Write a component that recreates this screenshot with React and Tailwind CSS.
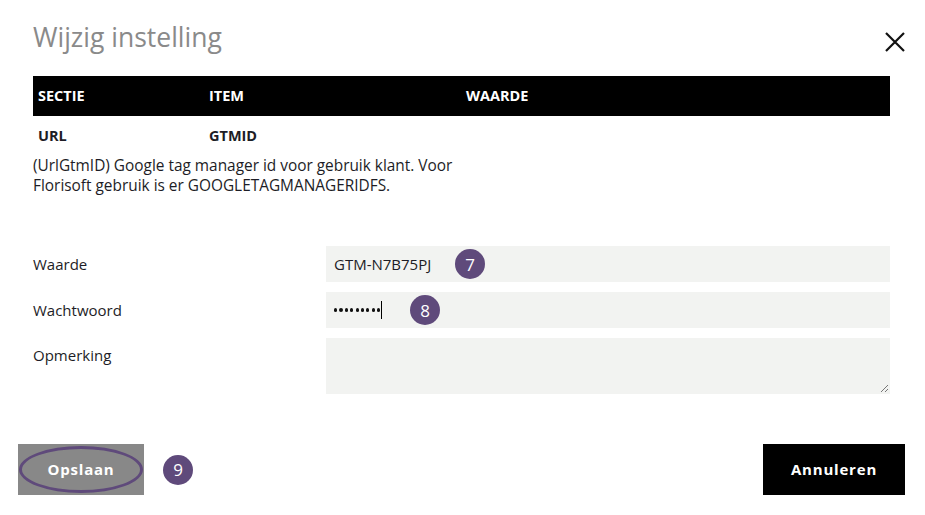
import React from 'react';

const Badge = ({ n, className = '' }) => (
  <span
    className={`flex items-center justify-center w-[30px] h-[30px] rounded-full bg-[#5f4a7b] text-white text-[17px] leading-none ${className}`}
  >
    {n}
  </span>
);

export default function App() {
  return (
    <div className="w-[925px] h-[515px] bg-white font-['Open_Sans',sans-serif] text-[#1d1d26]">
      {/* Header */}
      <div className="flex items-start justify-between pl-[33px] pr-[20px] pt-[19px]">
        <h1 className="text-[26.5px] leading-[36px] text-[#8a8a8a] font-normal">Wijzig instelling</h1>
        <button className="mt-[13px] w-[20px] h-[20px] flex items-center justify-center">
          <svg width="20" height="20" viewBox="0 0 20 20">
            <path d="M1 1 L19 19 M19 1 L1 19" stroke="#111" strokeWidth="2.2" />
          </svg>
        </button>
      </div>

      {/* Table */}
      <div className="mx-[33px] mt-[21px] w-[857px]">
        <div className="grid grid-cols-[171px_257px_1fr] h-[40px] items-center bg-black px-[5px] text-white text-[14.5px] font-bold">
          <span>SECTIE</span>
          <span>ITEM</span>
          <span>WAARDE</span>
        </div>
        <div className="grid grid-cols-[171px_257px_1fr] h-[40px] items-center px-[5px] text-[14.5px] font-bold">
          <span>URL</span>
          <span>GTMID</span>
          <span />
        </div>
        <p className="w-[450px] text-[15.4px] leading-[20px]">
          (UrlGtmID) Google tag manager id voor gebruik klant. Voor Florisoft gebruik is er GOOGLETAGMANAGERIDFS.
        </p>
      </div>

      {/* Form */}
      <div className="ml-[33px] mt-[50px] w-[857px] flex flex-col gap-[10px] text-[15px]">
        <div className="flex items-center">
          <label className="w-[293px]">Waarde</label>
          <div className="relative flex-1 h-[36px] bg-[#f2f3f1] flex items-center px-[8px]">
            <span>GTM-N7B75PJ</span>
            <Badge n="7" className="absolute left-[129px] top-[3px]" />
          </div>
        </div>
        <div className="flex items-center">
          <label className="w-[293px]">Wachtwoord</label>
          <div className="relative flex-1 h-[36px] bg-[#f2f3f1] flex items-center px-[8px]">
            <span className="flex items-center gap-[2.2px]">
              {[0, 1, 2, 3, 4, 5, 6, 7, 8].map((i) => (
                <span key={i} className="w-[3.2px] h-[3.2px] rounded-full bg-[#111]" />
              ))}
            </span>
            <span className="ml-[1px] w-px h-[18px] bg-black" />
            <Badge n="8" className="absolute left-[84px] top-[3px]" />
          </div>
        </div>
        <div className="flex items-start">
          <label className="w-[293px] pt-[6px]">Opmerking</label>
          <div className="relative flex-1 h-[56px] bg-[#f2f3f1]">
            <svg className="absolute right-[1px] bottom-[1px]" width="9" height="9" viewBox="0 0 9 9">
              <path d="M8 1 L1 8 M8 5 L5 8" stroke="#777" strokeWidth="1" />
            </svg>
          </div>
        </div>
      </div>

      {/* Footer */}
      <div className="mt-[50px] flex items-center justify-between pl-[18px] pr-[20px]">
        <div className="flex items-center">
          <button className="relative w-[126px] h-[51px] bg-[#888888] text-white text-[15px] font-bold tracking-[0.8px]">
            <span className="absolute inset-x-[1px] inset-y-[2px] rounded-[50%] border-[3px] border-[#5f4a7b]" />
            Opslaan
          </button>
          <Badge n="9" className="ml-[19px]" />
        </div>
        <button className="w-[142px] h-[51px] bg-black text-white text-[15px] font-bold tracking-[0.8px]">
          Annuleren
        </button>
      </div>
    </div>
  );
}
